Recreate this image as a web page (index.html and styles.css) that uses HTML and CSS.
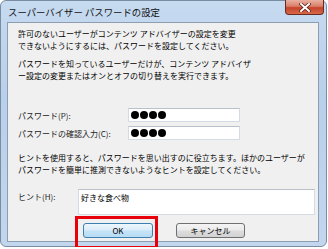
FILE: index.html
```html
<!DOCTYPE html>
<html>
<head>
    <title>スーパーバイザー パスワードの設定</title>
    <link rel="stylesheet" href="styles.css">
</head>
<body>
    <div class="window">
        <div class="titlebar">
            <span class="title">スーパーバイザー パスワードの設定</span>
            <div class="close">
                <svg width="12" height="9" viewBox="0 0 12 9">
                    <path d="M2 1 L10 8 M10 1 L2 8" stroke="#5a1a10" stroke-width="3.4" stroke-linecap="square"/>
                    <path d="M2 1 L10 8 M10 1 L2 8" stroke="#fff" stroke-width="2" stroke-linecap="square"/>
                </svg>
            </div>
        </div>

        <div class="client">
            <p class="para">許可のないユーザーがコンテンツ アドバイザーの設定を変更<br>できないようにするには、パスワードを設定してください。</p>
            <p class="para second">パスワードを知っているユーザーだけが、コンテンツ アドバイザ<br>ー設定の変更またはオンとオフの切り替えを実行できます。</p>

            <div class="fields">
                <div class="row">
                    <label class="label">パスワード(P):</label>
                    <div class="box pw"><i></i><i></i><i></i><i></i></div>
                </div>
                <div class="row">
                    <label class="label">パスワードの確認入力(C):</label>
                    <div class="box pw"><i></i><i></i><i></i><i></i></div>
                </div>
            </div>

            <p class="para hint-text">ヒントを使用すると、パスワードを思い出すのに役立ちます。ほかのユーザーが<br>パスワードを簡単に推測できないようなヒントを設定してください。</p>

            <div class="row hint-row">
                <label class="label short">ヒント(H):</label>
                <div class="box hint">好きな食べ物</div>
            </div>

            <div class="buttons">
                <div class="btn-wrap">
                    <div class="btn default">OK</div>
                    <span class="highlight"></span>
                </div>
                <div class="btn cancel">キャンセル</div>
            </div>
        </div>
    </div>
</body>
</html>
```

FILE: styles.css
```css
body {
    margin: 0;
    background-color: white;
    font-family: "Noto Sans CJK JP", "Noto Sans", sans-serif;
    color: #000;
}
.window {
    width: 327px;
    height: 247px;
    box-sizing: border-box;
    border: 1px solid #7a8ca2;
    border-radius: 6px;
    background: linear-gradient(to bottom, #c6daf0 0%, #b9d0ea 40%, #c2d6ee 100%);
    padding: 0 7px 4px 6px;
    display: flex;
    flex-direction: column;
}
.titlebar {
    height: 21px;
    display: flex;
    justify-content: space-between;
    align-items: flex-start;
    margin-right: -5px;
}
.title {
    font-size: 9.4px;
    line-height: 12px;
    margin-top: 5px;
    margin-left: 1px;
    color: #111;
}
.close {
    width: 39px;
    height: 15px;
    box-sizing: border-box;
    margin-top: -1px;
    border: 1px solid #6b2a1e;
    border-top: none;
    border-radius: 0 0 4px 4px;
    background: linear-gradient(to bottom, #eab0a2 0%, #d97e66 45%, #c4432b 55%, #d8694a 100%);
    display: flex;
    align-items: center;
    justify-content: center;
}
.client {
    flex: 1;
    box-sizing: border-box;
    background-color: #f0f0f0;
    border: 1px solid #8d9db2;
    padding: 5px 0 0 10px;
    display: flex;
    flex-direction: column;
    font-size: 8px;
}
.para {
    margin: 0;
    line-height: 12px;
    white-space: nowrap;
}
.second {
    margin-top: 6px;
}
.fields {
    margin-top: 26px;
    display: flex;
    flex-direction: column;
    gap: 4px;
}
.row {
    display: flex;
    align-items: center;
}
.label {
    width: 110px;
    color: #222;
}
.label.short {
    width: 60px;
}
.box {
    box-sizing: border-box;
    background-color: white;
    border: 1px solid #d5dbe3;
    border-top-color: #b9c0ca;
}
.pw {
    width: 112px;
    height: 14px;
    display: flex;
    align-items: center;
    gap: 1px;
    padding-left: 2px;
}
.pw i {
    width: 8px;
    height: 8px;
    border-radius: 50%;
    background-color: #000;
}
.hint-text {
    margin-top: 12px;
}
.hint-row {
    margin-top: 13px;
    align-items: flex-start;
}
.hint-row .label {
    margin-top: 2px;
}
.hint {
    width: 237px;
    height: 26px;
    padding: 2px 2px;
    line-height: 12px;
}
.buttons {
    margin-top: 8px;
    padding-left: 65px;
    display: flex;
    gap: 23px;
}
.btn-wrap {
    position: relative;
}
.btn {
    height: 15px;
    box-sizing: border-box;
    border: 1px solid #707070;
    border-radius: 3px;
    background: linear-gradient(to bottom, #f4f4f4 0%, #ebebeb 45%, #dddddd 55%, #d2d2d2 100%);
    display: flex;
    align-items: center;
    justify-content: center;
    line-height: 12px;
}
.btn.default {
    width: 70px;
    border-color: #3c7fb1;
    background: linear-gradient(to bottom, #eef7fd 0%, #dcecf8 45%, #c4e3f7 55%, #b8dcf4 100%);
}
.btn.cancel {
    width: 69px;
}
.highlight {
    position: absolute;
    left: -8px;
    top: -7px;
    right: -5px;
    bottom: -11px;
    border: 3px solid #e8000b;
}
```
